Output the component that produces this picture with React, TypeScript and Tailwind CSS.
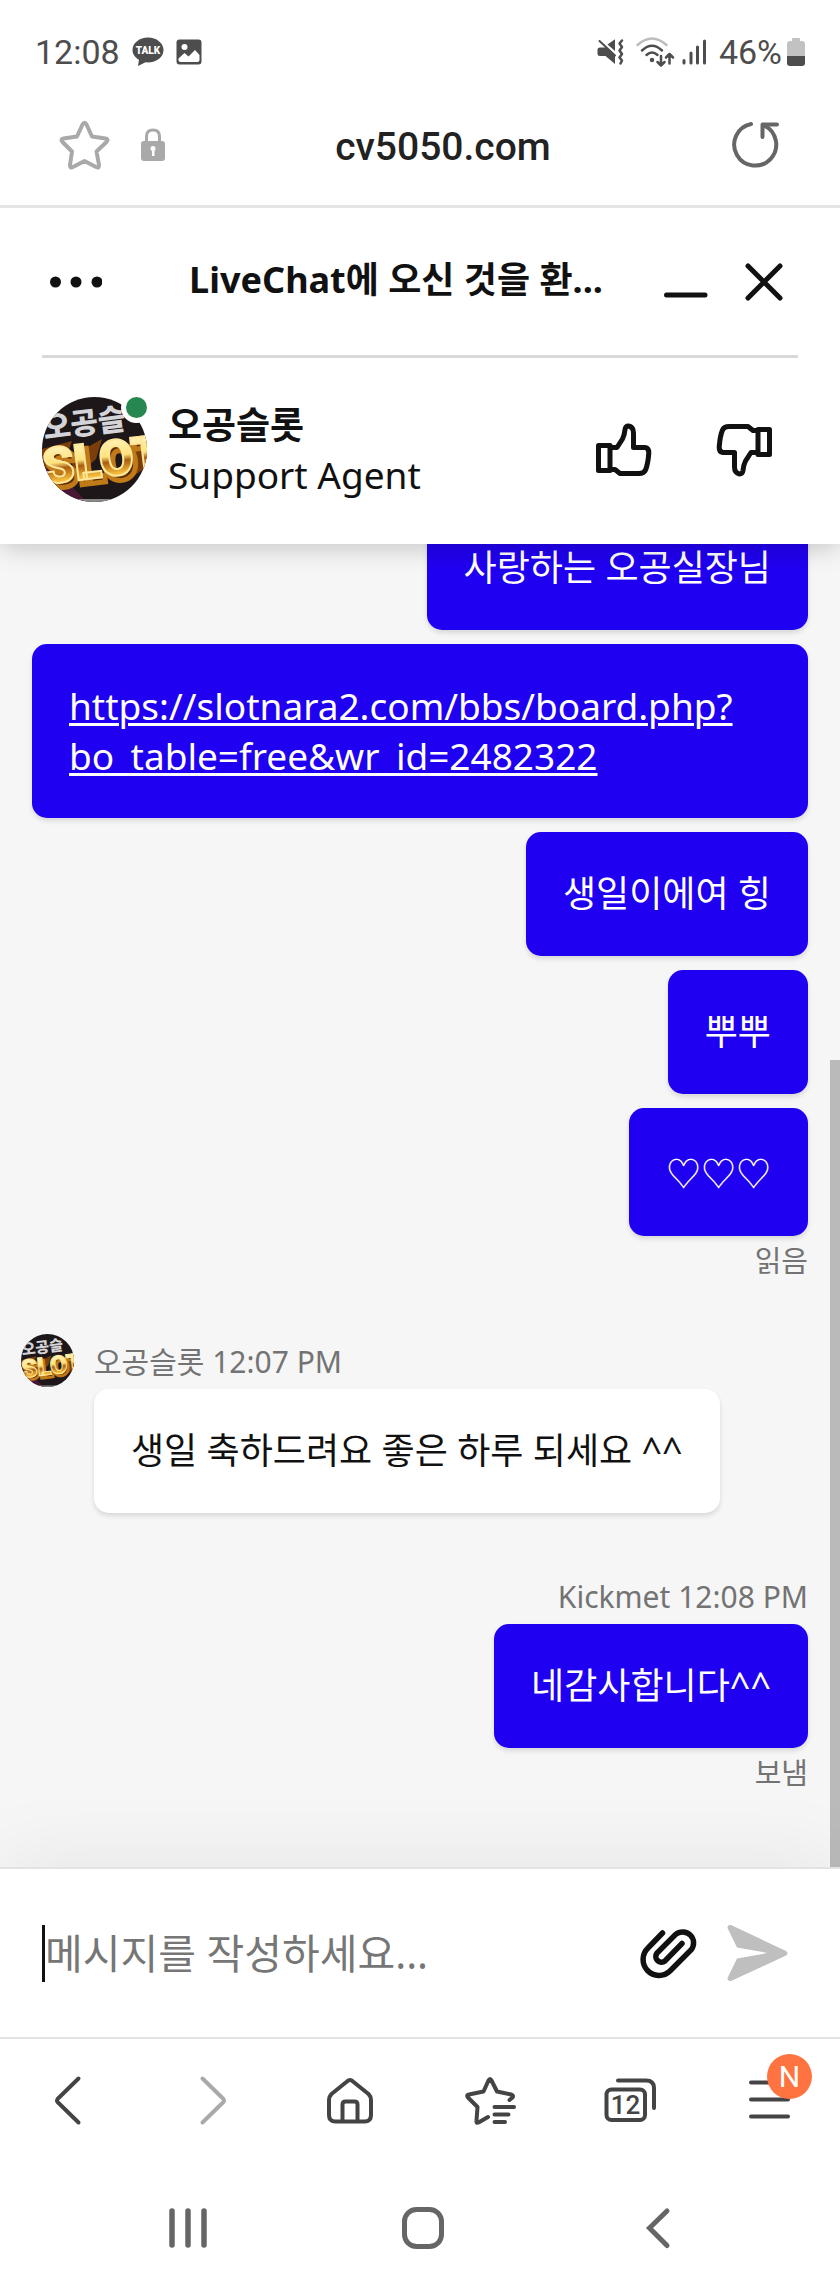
import { useState } from 'react'

type Message = {
  id: number
  text: string
  link?: boolean
}

const misMensajes: Message[] = [
  { id: 1, text: '사랑하는 오공실장님' },
  { id: 2, text: 'https://slotnara2.com/bbs/board.php?bo_table=free&wr_id=2482322', link: true },
  { id: 3, text: '생일이에여 힝' },
  { id: 4, text: '뿌뿌' },
]

function StatusBar() {
  return (
    <div className="relative z-20 flex h-[85px] items-center justify-between bg-white pt-[19px] pr-[35px] pl-[35px] font-['Roboto',sans-serif] text-[34px] text-[#4d4d4d]">
      <div className="flex items-center">
        <span>12:08</span>
        <svg className="ml-3" width="32" height="30" viewBox="0 0 32 30" aria-label="KakaoTalk">
          <path d="M16 0.500C7.500 0.500 0.500 6 0.500 13C0.500 17 3 20.500 7 22.800L6 29L13.500 25.300C24 26.200 31.500 20.500 31.500 13C31.500 6 24.500 0.500 16 0.500Z" fill="#4d4d4d" />
          <text x="16" y="17" textAnchor="middle" fontFamily="Roboto, sans-serif" fontSize="10" fontWeight="900" fill="#fff">TALK</text>
        </svg>
        <svg className="ml-3" width="26" height="26" viewBox="0 0 26 26" aria-label="Image">
          <rect x="0.500" y="0.500" width="25" height="25" rx="3" fill="#4d4d4d" />
          <circle cx="8.500" cy="8" r="3" fill="#fff" />
          <path d="M2.500 19.500L8.500 14L12.500 17.500L19 11L23.500 16V21Q23.500 23 21.500 23H4.500Q2.500 23 2.500 21Z" fill="#fff" />
        </svg>
      </div>
      <div className="flex items-center">
        <svg width="30" height="30" viewBox="0 0 30 30" fill="none" stroke="#4d4d4d" strokeLinecap="round" strokeLinejoin="round">
          <path d="M4 10.500H10L19 18.500V27L9.500 19H4Q1.500 19 1.500 17V12.500Q1.500 10.500 4 10.500Z" fill="#4d4d4d" stroke="none" />
          <path d="M11.500 7.500L19 2.300V14Z" fill="#4d4d4d" stroke="none" />
          <path d="M3.500 4L19 18.500" strokeWidth="2" />
          <path d="M26 3.500L23.500 6.500L26 10L23.500 13.500L26 17L23.500 20.500L26 23.500L24.500 26.500" strokeWidth="2.500" />
        </svg>
        <svg className="ml-2" width="42" height="32" viewBox="0 0 42 32" fill="none" stroke="#4d4d4d" strokeWidth="2.500" strokeLinecap="round" strokeLinejoin="round">
          <path d="M3.500 9Q18 -4 32.500 9" stroke="#bdbdbd" />
          <path d="M8 14.500Q18 5 28 14.500" />
          <path d="M12.500 19Q18 14 23.500 19" />
          <circle cx="18" cy="24" r="1" />
          <path d="M27 20V29M23.500 26L27 29.500L30.500 26" />
          <path d="M35.500 27.500V18M32 21.500L35.500 18L39 21.500" />
        </svg>
        <svg className="ml-[5px]" width="26" height="28" viewBox="0 0 26 28" fill="none" stroke="#4d4d4d" strokeWidth="3" strokeLinecap="round">
          <path d="M3 22.500V25M10 15V25M16.500 9V25M23.500 3V25" />
        </svg>
        <span className="ml-3">46%</span>
        <svg className="ml-[5px]" width="18" height="28" viewBox="0 0 18 28">
          <path d="M5 1Q5 0 6 0H12Q13 0 13 1V3H15Q18 3 18 6V18H0V6Q0 3 3 3H5Z" fill="#c2c2c2" />
          <path d="M0 18H18V25Q18 28 15 28H3Q0 28 0 25Z" fill="#4d4d4d" />
        </svg>
      </div>
    </div>
  )
}

function AddressBar() {
  return (
    <div className="relative z-20 flex h-[123px] items-center border-b-[3px] border-[#e5e5e5] bg-white pr-[59px] pl-[57px]">
      <button aria-label="Bookmark">
        <svg width="56" height="54" viewBox="0 0 56 54" fill="none" stroke="#a9a9a9" strokeWidth="4" strokeLinejoin="round">
          <path d="M25.500 6.500Q27.500 3 29.500 6.500L35 18.500L48.500 20.500Q52 21.500 49.500 24L39.500 33.500L42 47Q42.500 50.500 39 49L27.500 43L16 49Q12.500 50.500 13 47L15 33.500L5.500 24Q3 21.500 6.500 20.500L20 18.500Z" />
        </svg>
      </button>
      <svg className="ml-7" width="24" height="34" viewBox="0 0 24 34" aria-label="Secure">
        <path d="M5.500 14V8.500Q5.500 2 12 2Q18.500 2 18.500 8.500V14" fill="none" stroke="#a9a9a9" strokeWidth="3" />
        <rect x="0" y="13" width="24" height="20" rx="3" fill="#a9a9a9" />
        <circle cx="12" cy="20.500" r="2.500" fill="#fff" />
        <rect x="11" y="21" width="2.500" height="7" fill="#fff" />
      </svg>
      <button className="flex-1 pt-1 pr-2 text-center font-['Roboto',sans-serif] text-[39px] font-medium text-[#222]">cv5050.com</button>
      <button aria-label="Reload">
        <svg width="52" height="52" viewBox="0 0 52 52" fill="none" stroke="#666" strokeWidth="4" strokeLinecap="round" strokeLinejoin="round">
          <path d="M22 5A21 21 0 1 0 35 6.500" />
          <path d="M48 5.500H33.500V18" />
        </svg>
      </button>
    </div>
  )
}

function Avatar({ className }: { className: string }) {
  return (
    <svg className={className} viewBox="0 0 105 105" role="img" aria-label="오공슬롯">
      <defs>
        <linearGradient id="gold" x1="0" y1="0" x2="0" y2="1">
          <stop offset="0.1" stopColor="#fff6c8" />
          <stop offset="0.45" stopColor="#ffe27a" />
          <stop offset="0.55" stopColor="#a85c10" />
          <stop offset="0.75" stopColor="#f3b93a" />
          <stop offset="1" stopColor="#fff0a0" />
        </linearGradient>
        <clipPath id="round">
          <circle cx="52.500" cy="52.500" r="52.500" />
        </clipPath>
      </defs>
      <g clipPath="url(#round)">
        <rect width="105" height="105" fill="#1d1719" />
        <path d="M0 60L45 105H0Z" fill="#4a1636" />
        <path d="M0 102H105V105H0Z" fill="#888" />
        <path d="M0 52L30 44L24 62L0 74ZM28 60L60 42L54 62L34 80ZM86 60L105 44V70L84 84Z" fill="#7a3e0a" />
        <text x="4" y="36" transform="rotate(-7 52 52)" fontFamily="'Noto Sans CJK KR', sans-serif" fontWeight="900" fontSize="30" fill="#d4d4d8">
          오공슬
        </text>
        <g transform="rotate(-7 52 52)" fontFamily="'Roboto', sans-serif" fontWeight="900" fontSize="50">
          <text x="2" y="86" fill="#5a2c08" stroke="#c07a18" strokeWidth="5">SLOT</text>
          <text x="-1" y="81" fill="url(#gold)" stroke="#ffe79a" strokeWidth="2">SLOT</text>
        </g>
      </g>
    </svg>
  )
}

function ThumbIcon({ className }: { className?: string }) {
  return (
    <svg className={className} width="56" height="56" viewBox="0 0 56 56" fill="none" stroke="#111" strokeWidth="5" strokeLinejoin="round">
      <rect x="2.500" y="23.500" width="11.500" height="25" />
      <path d="M14 25.500H21L26.500 17Q28.500 13 29 7.500Q29.500 4 32.500 4Q37.500 5 37.500 11V25.500H49Q53 26 52.800 31Q52 42 49.500 48Q48 51.500 43 51.500H24L19 47.500H14" />
    </svg>
  )
}

function ChatHeader() {
  return (
    <header className="relative z-10 bg-white px-[42px] shadow-[0_6px_24px_-2px_rgba(0,0,0,0.2)]">
      <div className="flex h-[150px] items-center border-b-[3px] border-[#d9d9d9] pr-[14px] pl-2">
        <button aria-label="Menu">
          <svg width="52" height="12" viewBox="0 0 52 12" fill="#111">
            <circle cx="5.500" cy="6" r="5.500" />
            <circle cx="26" cy="6" r="5.500" />
            <circle cx="47" cy="6" r="5.500" />
          </svg>
        </button>
        <h1 className="flex-1 pb-1 pl-7 text-center text-[36px] leading-[50px] font-bold">LiveChat에 오신 것을 환...</h1>
        <button aria-label="Minimize">
          <svg width="48" height="40" viewBox="0 0 48 40" stroke="#111" strokeWidth="5" strokeLinecap="round">
            <path d="M4.500 33H43" />
          </svg>
        </button>
        <button className="ml-[34px]" aria-label="Close">
          <svg width="40" height="40" viewBox="0 0 40 40" stroke="#111" strokeWidth="5" strokeLinecap="round">
            <path d="M4 4L36 36M36 4L4 36" />
          </svg>
        </button>
      </div>
      <div className="flex h-[186px] items-center pr-[26px] pb-[3px]">
        <div className="relative">
          <Avatar className="size-[105px]" />
          <span className="absolute -top-[5px] -right-[5px] size-[31px] rounded-full border-[5px] border-white bg-[#268750]" />
        </div>
        <div className="ml-[21px] flex-1 text-[37px] leading-[50px]">
          <p className="font-bold">오공슬롯</p>
          <p>Support Agent</p>
        </div>
        <button aria-label="Good">
          <ThumbIcon />
        </button>
        <button className="ml-16" aria-label="Bad">
          <ThumbIcon className="rotate-180" />
        </button>
      </div>
    </header>
  )
}

function Bubble({ children }: { children: React.ReactNode }) {
  return (
    <div className="max-w-full rounded-[15px] bg-[#2000f0] p-[37px] text-[36px] leading-[50px] break-words text-white shadow-[0_3px_5px_rgba(0,0,0,0.12)]">
      {children}
    </div>
  )
}

function Messages() {
  return (
    <main className="relative flex min-h-0 flex-1 flex-col justify-end overflow-hidden bg-[#f6f6f6] pr-8 pb-[74px]">
      <div className="flex flex-col items-end gap-[14px] pl-8">
        {misMensajes.map((m) => (
          <Bubble key={m.id}>
            {m.link ? (
              <a href={m.text} className="block text-[37px] underline decoration-3 underline-offset-3">
                {m.text}
              </a>
            ) : (
              m.text
            )}
          </Bubble>
        ))}
        <Bubble>
          <p className="pt-1 text-[35px]">♡♡♡</p>
        </Bubble>
      </div>
      <p className="mt-[5px] text-right text-[29px] leading-[40px] text-[#737373]">읽음</p>

      {/* Agent */}
      <div className="mt-[53px] flex items-start gap-5 pl-[21px]">
        <Avatar className="size-[53px]" />
        <div className="pt-2">
          <p className="mb-[7px] text-[30px] leading-[40px] text-[#737373]">오공슬롯 12:07 PM</p>
          <div className="rounded-[15px] bg-white p-[37px] text-[36px] leading-[50px] shadow-[0_3px_5px_rgba(0,0,0,0.12)]">
            생일 축하드려요 좋은 하루 되세요 ^^
          </div>
        </div>
      </div>

      <div className="mt-16 flex flex-col items-end">
        <p className="mb-[7px] text-[30px] leading-[40px] text-[#737373]">Kickmet 12:08 PM</p>
        <Bubble>네감사합니다^^</Bubble>
        <p className="mt-[5px] text-[29px] leading-[40px] text-[#737373]">보냄</p>
      </div>

      {/* Scrollbar */}
      <div className="absolute right-0 bottom-0 h-[61%] w-[10px] bg-[#bababa]" />
    </main>
  )
}

function Composer() {
  const [text, setText] = useState('')

  return (
    <form
      onSubmit={(e) => e.preventDefault()}
      className="flex h-[172px] items-center border-y-2 border-[#e3e3e3] bg-white pr-[51px] pl-[42px]"
    >
      <span className="h-[57px] w-[3px] bg-[#111]" />
      <input
        aria-label="메시지를 작성하세요..."
        placeholder="메시지를 작성하세요..."
        value={text}
        onChange={(e) => setText(e.target.value)}
        className="min-w-0 flex-1 text-[41px] leading-[57px] outline-none placeholder:text-[#767676]"
      />
      <button type="button" aria-label="Attach">
        <svg width="64" height="58" viewBox="0 0 64 58" fill="none" stroke="#111" strokeWidth="5.500" strokeLinecap="round">
          <path d="M26.500 9L12 24A15.800 15.800 0 0 0 34 47L55 26A11 11 0 0 0 39.500 10.500L21 29A5.700 5.700 0 0 0 29 37L46 19.500" />
        </svg>
      </button>
      <button className="ml-[27px]" aria-label="Send">
        <svg width="62" height="58" viewBox="0 0 62 58" fill="#bfbfbf">
          <path d="M0.500 4Q0.500 0.500 4 1L59 27Q62 29 59 31.500L4 57Q0.500 57.500 0.500 54L10 34.500L40.500 29L10 23.500Z" />
        </svg>
      </button>
    </form>
  )
}

const toolIcon = 'h-[52px] w-[54px] fill-none stroke-[#444] stroke-4'

function Toolbar() {
  return (
    <nav className="grid h-[122px] grid-cols-6 place-items-center">
      <button aria-label="Back">
        <svg className={toolIcon} viewBox="0 0 54 52" strokeLinecap="round">
          <path d="M35.500 4.500L14.500 25Q13.500 26.500 14.500 28L35.500 48.500" />
        </svg>
      </button>
      <button aria-label="Forward">
        <svg className="h-[52px] w-[54px] fill-none stroke-[#a9a9a9] stroke-4" viewBox="0 0 54 52" strokeLinecap="round">
          <path d="M19.500 4.500L40.500 25Q41.500 26.500 40.500 28L19.500 48.500" />
        </svg>
      </button>
      <button aria-label="Home">
        <svg className={toolIcon} viewBox="0 0 54 52" strokeLinejoin="round">
          <path d="M6 26Q6 22.500 8.500 20L24 7.500Q27 4.500 30 7.500L45.500 20Q48 22.500 48 26V41Q48 47.500 41.500 47.500H12.500Q6 47.500 6 41Z" />
          <path d="M19.500 47.500V30.500Q19.500 27.500 22.500 27.500H31.500Q34.500 27.500 34.500 30.500V47.500" />
        </svg>
      </button>
      <button aria-label="Bookmarks">
        <svg className={toolIcon} viewBox="0 0 54 52" strokeLinecap="round" strokeLinejoin="round">
          <path d="M25 43L15.500 48.500Q13 49.500 13.500 46.500L14.500 33L5 23.500Q3 21 6 20.500L20.500 17.500L25.500 6.500Q27 3.500 28.500 6.500L34 17.500L48 20.500Q51 21.500 49.500 23.500L46.500 26" />
          <path d="M31.500 33H51M31.500 40.500H45.500M31.500 48H42" />
        </svg>
      </button>
      <button aria-label="Tabs">
        <svg className={toolIcon} viewBox="0 0 54 52" strokeLinecap="round">
          <rect x="3.500" y="15.500" width="38.500" height="30.500" rx="5" />
          <path d="M15 6.500H43Q51 6.500 51 14V34" />
          <text x="22.500" y="40" textAnchor="middle" fontFamily="Roboto, sans-serif" fontSize="26" fontWeight="500" fill="#444" stroke="none">12</text>
        </svg>
      </button>
      <button aria-label="Menu" className="relative">
        <svg className={toolIcon} viewBox="0 0 54 52" strokeLinecap="round">
          <path d="M8 8.500H45M8 25.500H45M8 42.500H45" />
        </svg>
        <span className="absolute -top-5 left-6 flex size-[45px] items-center justify-center rounded-full bg-[#ff7340] font-['Roboto',sans-serif] text-[30px] leading-none text-white">
          N
        </span>
      </button>
    </nav>
  )
}

function SystemNav() {
  return (
    <nav className="grid h-[128px] grid-cols-3 place-items-center pt-[6px] pr-[65px] pl-[71px]">
      <button aria-label="Recents">
        <svg width="44" height="44" viewBox="0 0 44 44" fill="none" stroke="#666" strokeWidth="5.500" strokeLinecap="round">
          <path d="M6 5V39M22 5V39M38 5V39" />
        </svg>
      </button>
      <button aria-label="Home">
        <svg width="44" height="44" viewBox="0 0 44 44" fill="none" stroke="#666" strokeWidth="5">
          <rect x="3.500" y="3.500" width="37" height="37" rx="12" />
        </svg>
      </button>
      <button aria-label="Back">
        <svg width="44" height="44" viewBox="0 0 44 44" fill="none" stroke="#666" strokeWidth="5" strokeLinecap="round">
          <path d="M31 5L13.500 22L31 39.500" />
        </svg>
      </button>
    </nav>
  )
}

function App() {
  return (
    <div className="flex h-screen flex-col bg-white font-['Noto_Sans','Noto_Sans_CJK_KR',sans-serif] text-[#111]">
      <StatusBar />
      <AddressBar />
      <ChatHeader />
      <Messages />
      <footer className="relative z-10 bg-white shadow-[0_0_80px_rgba(0,0,0,0.08)]">
        <Composer />
        <Toolbar />
        <SystemNav />
      </footer>
    </div>
  )
}

export default App
